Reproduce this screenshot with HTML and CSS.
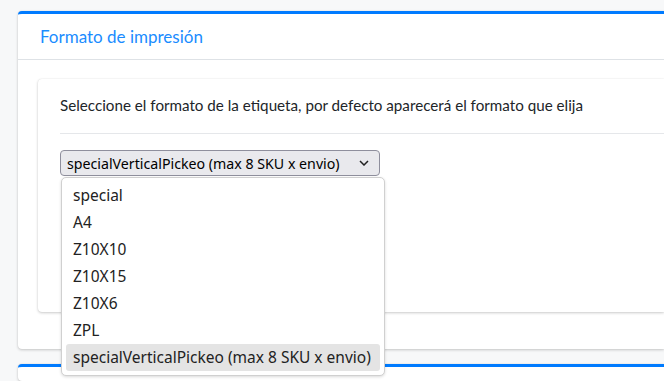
FILE: index.html
```html
<!DOCTYPE html>
<html>
<head>
	<title>Formato de impresión</title>
	<link rel="stylesheet" href="styles.css">
</head>
<body>
	<div class="content">
		<div class="card card-primary">
			<div class="card-header">
				<h3 class="card-title">Formato de impresión</h3>
			</div>
			<div class="card-body">
				<div class="card inner">
					<p class="lead">Seleccione el formato de la etiqueta, por defecto aparecerá el formato que elija</p>
					<hr>
					<div class="picker">
						<div class="select">
							<span>specialVerticalPickeo (max 8 SKU x envio)</span>
							<svg class="chevron" width="10" height="6" viewBox="0 0 10 6"><path d="M1 1l4 4 4-4" fill="none" stroke="#222" stroke-width="1.5"/></svg>
						</div>
						<ul class="options">
							<li>special</li>
							<li>A4</li>
							<li>Z10X10</li>
							<li>Z10X15</li>
							<li>Z10X6</li>
							<li>ZPL</li>
							<li class="selected">specialVerticalPickeo (max 8 SKU x envio)</li>
						</ul>
					</div>
				</div>
			</div>
		</div>
		<div class="card card-primary next"></div>
	</div>
</body>
</html>
```

FILE: styles.css
```css
html, body {
	height: 381px;
	overflow: hidden;
}
body {
	margin: 0;
	background: #f7f8f9;
	font-family: "Lato", "Liberation Sans", sans-serif;
	color: #212529;
}
.content {
	padding: 11px 0 0 18px;
}
.card {
	background: #fff;
	border-radius: 4px 0 0 4px;
	box-shadow: 0 0 1px rgba(0,0,0,.13), 0 1px 3px rgba(0,0,0,.2);
}
.card-primary {
	border-top: 3px solid #007bff;
}
.card-header {
	padding: 0 22px;
	height: 45px;
	display: flex;
	align-items: center;
	border-bottom: 1px solid #dee2e6;
}
.card-title {
	margin: 0;
	font-weight: normal;
	font-size: 17px;
	color: #1a8cff;
}
.card-body {
	padding: 19px 0 37px 20px;
}
.inner {
	height: 233px;
	padding: 14px 0 0 22px;
	box-sizing: border-box;
}
.lead {
	margin: 0;
	font-size: 15.2px;
	line-height: 24px;
}
hr {
	margin: 16px 0 16px;
	border: 0;
	border-top: 1px solid #e5e7ea;
}
.picker {
	position: relative;
	width: 320px;
}
.select {
	height: 26px;
	box-sizing: border-box;
	display: flex;
	align-items: center;
	justify-content: space-between;
	padding: 0 10px 0 6px;
	background: #e9e9ed;
	border: 1px solid #8f8f9d;
	border-radius: 4px;
	font-family: "Noto Sans", sans-serif;
	font-size: 14.2px;
	color: #000;
}
.options {
	position: absolute;
	left: 1px; top: 27px;
	width: 324px;
	margin: 0;
	padding: 4px;
	box-sizing: border-box;
	list-style: none;
	background: #fff;
	border: 1px solid #d0d0d0;
	border-radius: 5px;
	box-shadow: 0 1px 3px rgba(0,0,0,.15);
	font-family: "Noto Sans", sans-serif;
	font-size: 15.5px;
	color: #222;
}
.options li {
	height: 27px;
	line-height: 27px;
	padding-left: 7px;
	border-radius: 3px;
}
.options li.selected {
	background: #e4e4e4;
}
.next {
	margin-top: 15px;
	height: 14px;
}
```
